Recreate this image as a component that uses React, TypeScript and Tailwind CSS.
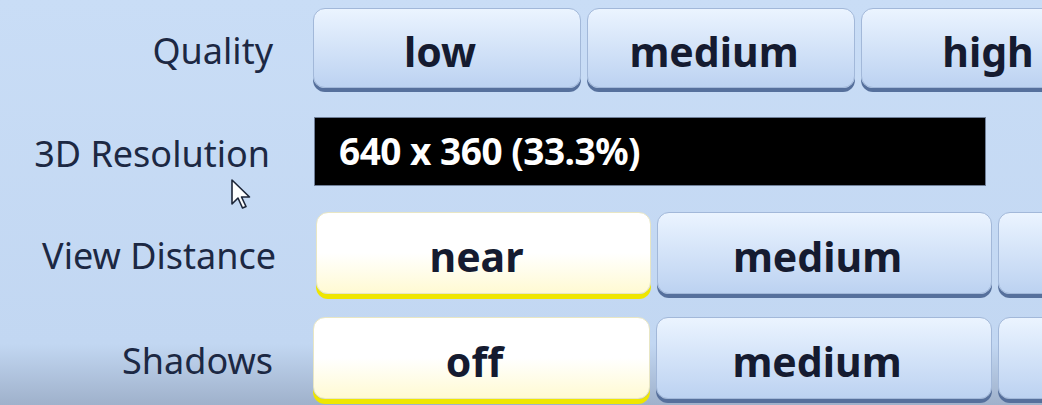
import React from "react";
import clsx from "clsx";

const Option = ({label, selected, w}: {label?: string; selected?: boolean; w: string}) => {
    return <div
        className={clsx(
            "shrink-0 flex items-center justify-center rounded-[12px] border font-bold text-[41px] text-[#151b30] leading-none pr-[14px] pt-[6px]",
            w,
            selected
                ? "bg-linear-to-b from-white via-white to-[#fffad2] border-[#e8e6c4] shadow-[0_5px_0_#efe600]"
                : "bg-linear-to-b from-[#ebf4ff] to-[#bcd2f1] border-[#a2b8d9] shadow-[0_4px_0_#56709c]"
        )}>
        {label && <span>{label}</span>}
    </div>
}

const Label = ({children, className}: {children: React.ReactNode; className?: string}) =>
    <div className={clsx("w-[276px] shrink-0 text-right text-[36px] text-[#1c2843] leading-none pt-[5px]", className)}>{children}</div>

export default function App() {
    return <div
        className="relative w-[1042px] h-[405px] overflow-hidden font-['Noto_Sans',sans-serif] bg-linear-to-b from-[#c9ddf6] via-[#c2d7f2] via-85% to-[#9fb1cb]">
        <div className="flex flex-col pt-[8px]">
            <div className="flex items-center h-[80px]">
                <Label className="pr-[3px]">Quality</Label>
                <div className="flex gap-[6px] ml-[37px] h-full">
                    <Option label="low" w="w-[268px]"/>
                    <Option label="medium" w="w-[268px]"/>
                    <Option label="high" w="w-[268px]"/>
                </div>
            </div>

            <div className="flex items-center h-[69px] mt-[29px]">
                <Label className="pr-[6px] pt-0">3D Resolution</Label>
                <div className="ml-[38px] h-full w-[672px] bg-black border border-[#6f7f98] flex items-center pl-[24px]">
                    <span className="text-white font-bold text-[37px] tracking-[-0.5px] leading-none -mt-[2px]">640 x 360 (33.3%)</span>
                </div>
            </div>

            <div className="flex items-center h-[82px] mt-[26px]">
                <Label>View Distance</Label>
                <div className="flex gap-[6px] ml-[40px] h-full">
                    <Option label="near" selected w="w-[335px]"/>
                    <Option label="medium" w="w-[335px]"/>
                    <Option w="w-[335px]"/>
                </div>
            </div>

            <div className="flex items-center h-[82px] mt-[23px]">
                <Label className="pr-[3px]">Shadows</Label>
                <div className="flex gap-[6px] ml-[37px] h-full">
                    <Option label="off" selected w="w-[337px]"/>
                    <Option label="medium" w="w-[336px]"/>
                    <Option w="w-[336px]"/>
                </div>
            </div>
        </div>

        {/* mouse pointer */}
        <svg className="absolute left-[230px] top-[178px]" width="22" height="34" viewBox="0 0 22 34">
            <path d="M2 2 L2 26 L8 20 L12.5 30 L16 28.5 L11.5 19 L19.5 19 Z" fill="white" stroke="#1c2538"
                  strokeWidth="1.6" strokeLinejoin="round"/>
        </svg>
    </div>
}
